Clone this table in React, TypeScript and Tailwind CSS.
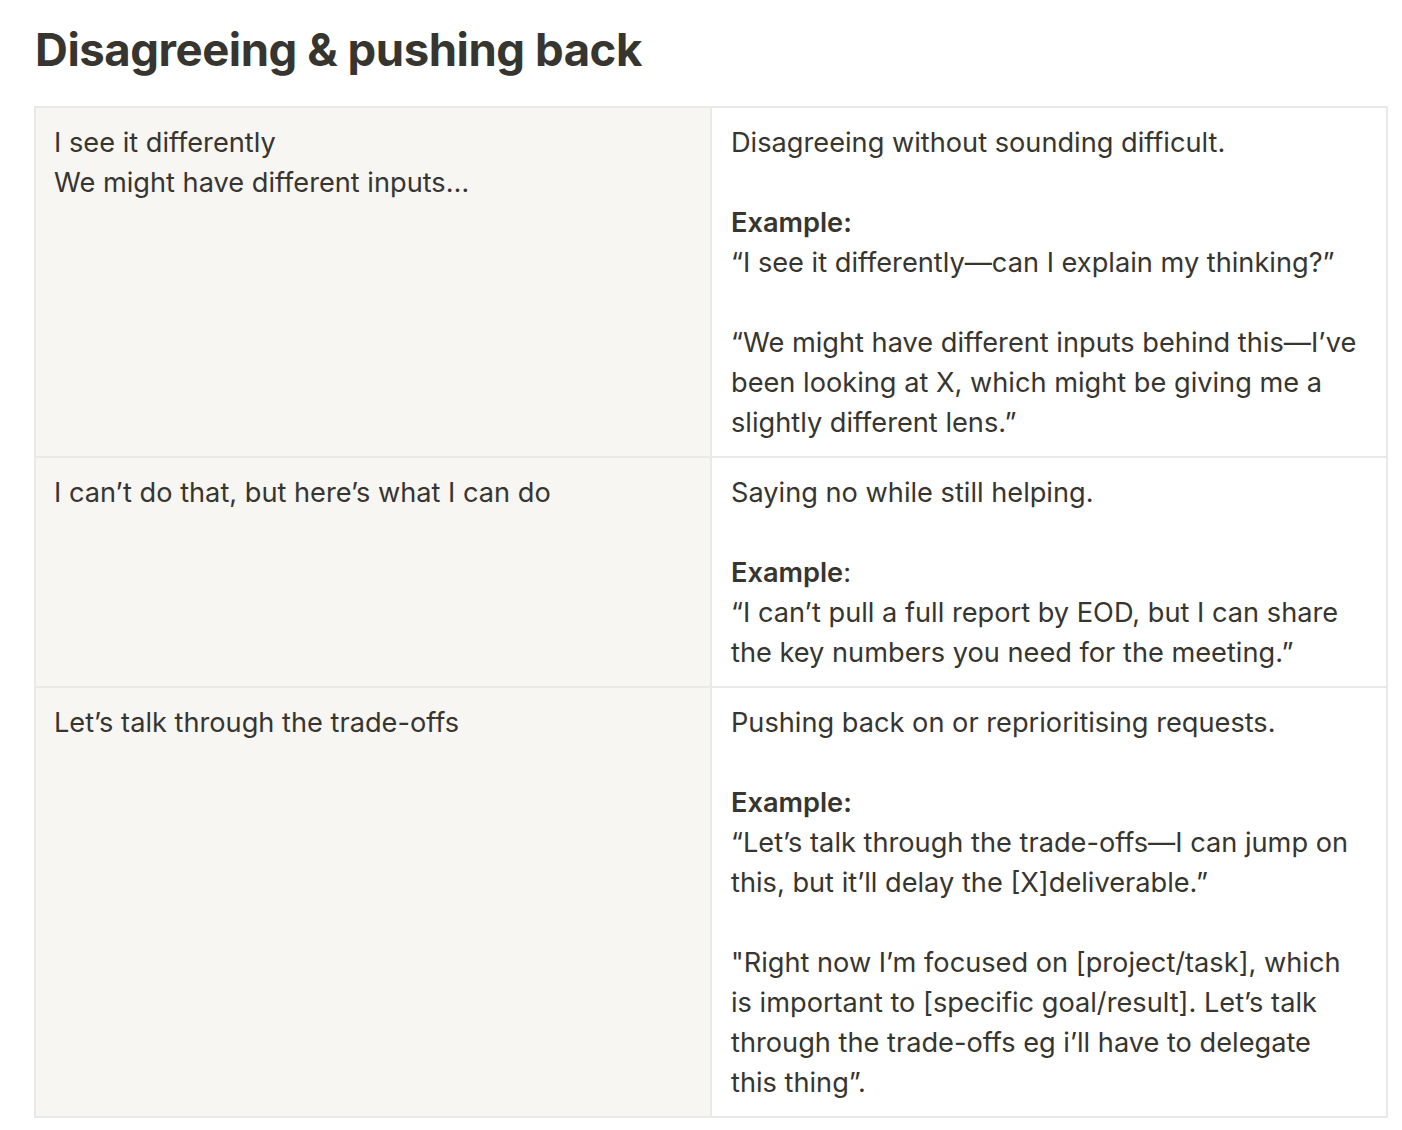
const rows = [
  {
    left: ['I see it differently', 'We might have different inputs…'],
    right: (
      <>
        <p>Disagreeing without sounding difficult.</p>
        <p className="h-10" />
        <p className="font-semibold">Example:</p>
        <p>“I see it differently—can I explain my thinking?”</p>
        <p className="h-10" />
        <p>“We might have different inputs behind this—I’ve been looking at X, which might be giving me a slightly different lens.”</p>
      </>
    ),
  },
  {
    left: ['I can’t do that, but here’s what I can do'],
    right: (
      <>
        <p>Saying no while still helping.</p>
        <p className="h-10" />
        <p>
          <span className="font-semibold">Example</span>:
        </p>
        <p>“I can’t pull a full report by EOD, but I can share the key numbers you need for the meeting.”</p>
      </>
    ),
  },
  {
    left: ['Let’s talk through the trade-offs'],
    right: (
      <>
        <p>Pushing back on or reprioritising requests.</p>
        <p className="h-10" />
        <p className="font-semibold">Example:</p>
        <p>“Let’s talk through the trade-offs—I can jump on this, but it’ll delay the [X]deliverable.”</p>
        <p className="h-10" />
        <p>"Right now I’m focused on [project/task], which is important to [specific goal/result]. Let’s talk through the trade-offs eg i’ll have to delegate this thing”.</p>
      </>
    ),
  },
];

export default function App() {
  return (
    <div className="min-h-screen bg-white text-[#37352f] font-['Inter',sans-serif] pl-[34px] pr-[14px] pt-[22px]">
      <h1 className="text-[45.5px] leading-[56px] font-bold tracking-[-0.01em] pl-[1px]">Disagreeing &amp; pushing back</h1>

      <table className="mt-[28px] w-[1354px] border-collapse table-fixed text-[27.2px] leading-[40px]">
        <tbody>
          {rows.map((row, i) => (
            <tr key={i}>
              <td className="w-1/2 align-top bg-[#f7f6f3] border-2 border-[#e9e9e7] pl-[18px] pr-[19px] pt-[15px] pb-[13px]">
                {row.left.map((t) => (
                  <p key={t}>{t}</p>
                ))}
              </td>
              <td className="w-1/2 align-top border-2 border-[#e9e9e7] pl-[19px] pr-[26px] pt-[15px] pb-[13px]">
                {row.right}
              </td>
            </tr>
          ))}
        </tbody>
      </table>
    </div>
  );
}
